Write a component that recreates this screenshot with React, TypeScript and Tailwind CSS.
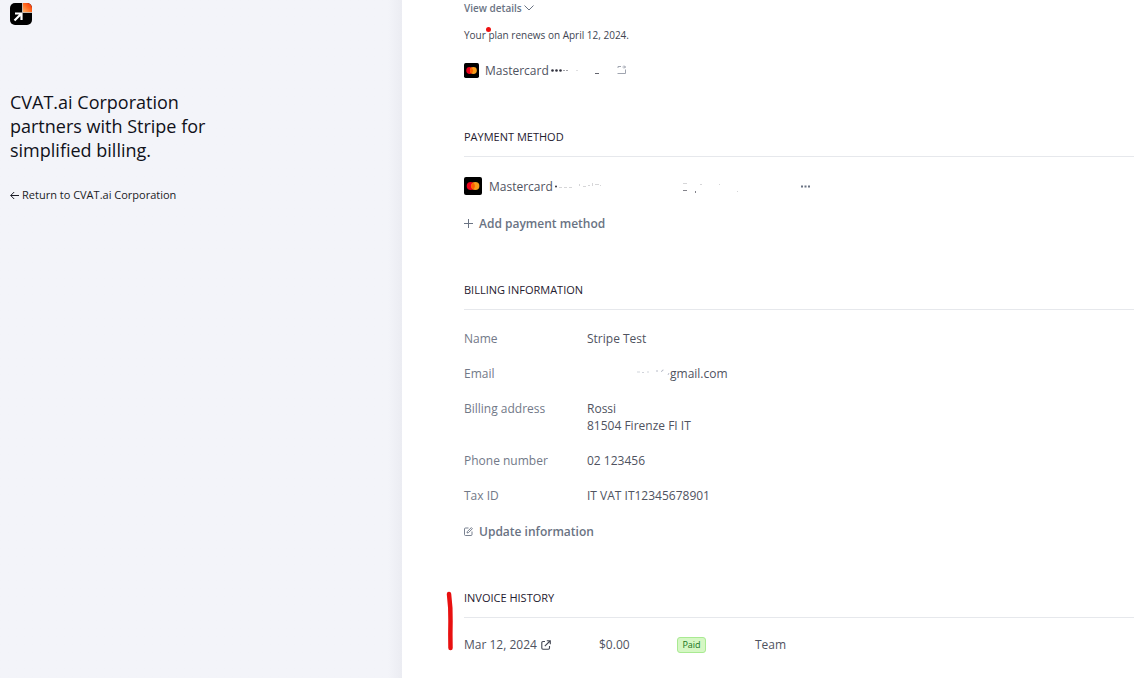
import type { ReactNode } from "react";

const details: { label: string; lines: ReactNode[] }[] = [
  { label: "Name", lines: ["Stripe Test"] },
  {
    label: "Email",
    lines: [
      <span key="email" className="flex items-center">
        <svg className="ml-12 h-4 w-[35px]" viewBox="0 0 35 16" fill="none" stroke="#9aa0b0" aria-hidden="true">
          <path d="M2 6h3M7 6.500h2M12 6h2" opacity=".45" />
          <path d="M22 6V4M26.500 6q0-2 2-2M33 9l1-2" opacity=".7" />
        </svg>
        gmail.com
      </span>,
    ],
  },
  { label: "Billing address", lines: ["Rossi", "81504 Firenze FI IT"] },
  { label: "Phone number", lines: ["02 123456"] },
  { label: "Tax ID", lines: ["IT VAT IT12345678901"] },
];

function Logo() {
  return (
    <svg className="h-[22px] w-[22px]" viewBox="0 0 22 22" role="img" aria-label="CVAT.ai">
      <defs>
        <linearGradient id="flame" x1="0" y1="1" x2="1" y2="0">
          <stop offset="0" stopColor="#ffb066" />
          <stop offset=".5" stopColor="#ff6a1f" />
          <stop offset="1" stopColor="#f02b08" />
        </linearGradient>
      </defs>
      <rect width="22" height="22" rx="5" fill="#000" />
      <path d="M13 0h4a5 5 0 0 1 5 5v4h-9z" fill="url(#flame)" />
      <path d="M12.500 0v9.500H22" fill="none" stroke="#c9b7a8" strokeWidth="1" />
      <path d="M4.500 17.500l6-6M5 10.500h6.500V17" fill="none" stroke="#fff" strokeWidth="2.200" />
    </svg>
  );
}

function Mastercard({ className }: { className: string }) {
  return (
    <svg className={className} viewBox="0 0 18 18" role="img" aria-label="Mastercard">
      <rect width="18" height="18" rx="2" fill="#000" />
      <circle cx="6.800" cy="9" r="4.100" fill="#eb001b" />
      <circle cx="11.300" cy="9" r="4.100" fill="#f79e1b" />
      <path d="M9.050 5.570a4.100 4.100 0 0 1 0 6.860a4.100 4.100 0 0 1 0-6.860z" fill="#ff5f00" />
    </svg>
  );
}

function Section({ title, children, className }: { title: string; children: ReactNode; className: string }) {
  return (
    <section className={className}>
      <h2 className="border-b border-[#e6e8ec] pb-[9px] text-[11px] leading-5 text-[#1f2030]">{title}</h2>
      {children}
    </section>
  );
}

export default function App() {
  return (
    <div className="flex h-screen overflow-hidden bg-white font-['Open_Sans','Noto_Sans',sans-serif] text-[12px] leading-[17px] text-[#50535f]">
      <aside className="w-[35.45%] shrink-0 bg-[#f3f4f9] bg-linear-to-l from-[#ebecf2] to-[#f3f4f9] to-[14px] px-[10px] pt-[3px] text-[#1a1b25]">
        <Logo />
        <h1 className="mt-[65px] max-w-[220px] text-[18px] leading-[24px] text-[#10111a]">
          CVAT.ai Corporation partners with Stripe for simplified billing.
        </h1>
        <a href="#return" className="mt-[23px] flex items-center gap-[3px] text-[11px] leading-5">
          <svg className="h-[9px] w-[9px]" viewBox="0 0 9 9" fill="none" stroke="currentColor" aria-hidden="true">
            <path d="M9 4.500H.8M4.200 1L.7 4.500l3.500 3.500" />
          </svg>
          Return to CVAT.ai Corporation
        </a>
      </aside>

      <main className="min-w-0 flex-1 pl-[62px]">
        <button type="button" className="flex h-4 items-center gap-[2px] text-[10px] font-semibold text-[#6a7383]">
          View details
          <svg className="h-[10px] w-[10px]" viewBox="0 0 10 10" fill="none" stroke="currentColor" aria-hidden="true">
            <path d="M.5 2.500L5 7l4.500-4.500" />
          </svg>
        </button>
        <p className="relative mt-[9px] text-[10px] leading-5 text-[#414552]">
          Your plan renews on April 12, 2024.
          <span className="absolute top-[2px] left-[22px] h-[5px] w-[5px] rounded-full bg-[#ee1111]" />
        </p>
        <div className="mt-[15px] flex h-5 items-center">
          <Mastercard className="h-[15px] w-[15px]" />
          <span className="ml-[6px]">Mastercard</span>
          <svg className="ml-[2px] h-4 w-[50px]" viewBox="0 0 50 16" aria-hidden="true">
            <g fill="#30313d">
              <circle cx="1.500" cy="8.500" r="1.300" />
              <circle cx="5.500" cy="8.500" r="1.300" />
              <circle cx="9.500" cy="8.500" r="1.300" />
              <path d="M12 8h2v1h-2zM15 8h2v1h-2z" opacity=".45" />
              <path d="M25 8h2v1h-2z" opacity=".15" />
              <path d="M44 11h4v1h-4z" opacity=".75" />
            </g>
          </svg>
          <button type="button" aria-label="Change card" className="ml-4">
            <svg className="h-[10px] w-[10px]" viewBox="0 0 10 10" fill="none" stroke="#a0a5b0" aria-hidden="true">
              <path d="M1 3V1.500h3M.5 8.500h8V4.500M5.500 2h3M7 .5L8.500 2 7 3.500" />
            </svg>
          </button>
        </div>

        <Section title="PAYMENT METHOD" className="mt-[47px]">
          <div className="mt-5 flex h-[18px] items-center">
            <Mastercard className="h-[18px] w-[18px]" />
            <span className="ml-[7px]">Mastercard</span>
            <svg className="ml-[2px] h-4 w-[188px]" viewBox="2 0 188 16" fill="#30313d" aria-hidden="true">
              <circle cx="3" cy="8.500" r="1" />
              <path d="M6 9h3v1H6zM11 9h3v1h-3zM16 9h3v1h-3zM26 6h1v2h-1zM30 8h3v1h-3zM35 7h2v1h-2zM39 5h1v3h-1zM42 6h4v1h-4zM47 7h1v1h-1z" opacity=".2" />
              <path d="M130 5h4v1h-4zM147 6h2v1h-2zM166 6h1v1h-1zM184 13h1v1h-1z" opacity=".2" />
              <path d="M130 12h4v1h-4zM142 13h1v2h-1z" opacity=".6" />
            </svg>
            <button type="button" aria-label="Card options" className="ml-[58px]">
              <svg className="h-[3px] w-[9px]" viewBox="0 0 9 3" fill="#6a7383" aria-hidden="true">
                <path d="M0 .5h2v2H0zM3.500 .5h2v2h-2zM7 .5h2v2H7z" />
              </svg>
            </button>
          </div>
          <button type="button" className="mt-5 flex items-center gap-[6px] font-semibold text-[#6a7383]">
            <svg className="h-[9px] w-[9px]" viewBox="0 0 9 9" stroke="currentColor" aria-hidden="true">
              <path d="M4.500 0v9M0 4.500h9" />
            </svg>
            Add payment method
          </button>
        </Section>

        <Section title="BILLING INFORMATION" className="mt-12">
          <dl className="mt-5 flex flex-col gap-[18px]">
            {details.map(({ label, lines }) => (
              <div key={label} className="flex">
                <dt className="w-[123px] shrink-0 text-[#727988]">{label}</dt>
                <dd>
                  {lines.map((line, i) => (
                    <div key={i}>{line}</div>
                  ))}
                </dd>
              </div>
            ))}
          </dl>
          <button type="button" className="mt-[19px] flex items-center gap-[6px] font-semibold text-[#6a7383]">
            <svg className="h-[9px] w-[9px]" viewBox="0 0 9 9" fill="none" stroke="currentColor" strokeWidth=".9" aria-hidden="true">
              <path d="M4.500 1H1.500a1 1 0 0 0-1 1v5.500a1 1 0 0 0 1 1H7a1 1 0 0 0 1-1V4.500M3 6l.4-1.500L7.300.6l1.100 1.100-3.900 3.900z" />
            </svg>
            Update information
          </button>
        </Section>

        <Section title="INVOICE HISTORY" className="relative mt-12">
          <svg className="absolute top-[3px] -left-[18px] h-[60px] w-[8px]" viewBox="0 0 8 60" fill="none" stroke="#e81010" strokeWidth="4.500" strokeLinecap="round" aria-hidden="true">
            <path d="M3 3Q4.800 17 4.500 30T4.500 57" />
          </svg>
          <table className="mt-[18px] text-left">
            <tbody>
              <tr>
                <td className="w-[135px] p-0">
                  <a href="#invoice" className="flex items-center gap-[4px]">
                    Mar 12, 2024
                    <svg className="h-[10px] w-[10px]" viewBox="0 0 10 10" fill="none" stroke="#414552" strokeWidth="1.100" aria-hidden="true">
                      <path d="M4 1.500H2a1.200 1.200 0 0 0-1.200 1.200V8A1.200 1.200 0 0 0 2 9.200h5.300A1.200 1.200 0 0 0 8.500 8V6M3.800 6.200L9 1M5.800.7h3.500v3.500" />
                    </svg>
                  </a>
                </td>
                <td className="w-[78px] p-0">$0.00</td>
                <td className="w-[78px] p-0">
                  <span className="block w-[29px] rounded-[3px] border border-[#a9ea92] bg-[#d5f7c4] text-center text-[9px] leading-[14px] text-[#17741b]">
                    Paid
                  </span>
                </td>
                <td className="p-0">Team</td>
              </tr>
            </tbody>
          </table>
        </Section>
      </main>
    </div>
  );
}
